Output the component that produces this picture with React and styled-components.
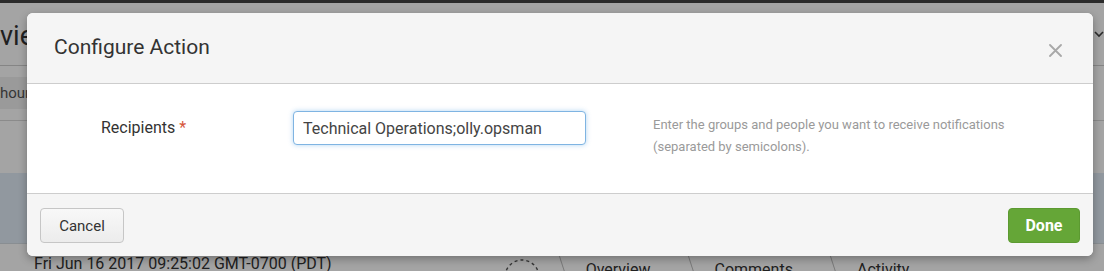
import React from 'react';
import styled, { createGlobalStyle } from 'styled-components';

const GlobalStyle = createGlobalStyle`
  html, body {
    margin: 0;
    padding: 0;
    width: 1104px;
    height: 271px;
    overflow: hidden;
    background: #fff;
    font-family: Roboto, "Liberation Sans", Arial, sans-serif;
  }
  * { box-sizing: border-box; }
`;

function App() {
  return (
    <Screen>
      <GlobalStyle />
      <Page>
        <TopStrip />
        <PageHeader>
          <PageTitle>view</PageTitle>
          <Chevron width="10" height="7" viewBox="0 0 10 7">
            <polyline points="1,1 5,5 9,1" fill="none" stroke="#444" strokeWidth="1.6" />
          </Chevron>
        </PageHeader>
        <FilterRow>
          <TimeBox>hours</TimeBox>
        </FilterRow>
        <GapRow />
        <SelectedRow />
        <DetailRow>
          <Timestamp>Fri Jun 16 2017 09:25:02 GMT-0700 (PDT)</Timestamp>
          <Spinner width="40" height="40" viewBox="0 0 40 40">
            <circle cx="20" cy="20" r="17" fill="none" stroke="#555" strokeWidth="1.4" strokeDasharray="3 3" />
          </Spinner>
          <Tabs>
            <Tab>Overview</Tab>
            <Tab>Comments</Tab>
            <Tab>Activity</Tab>
          </Tabs>
        </DetailRow>
      </Page>

      <Overlay />

      <Modal>
        <ModalHeader>
          <ModalTitle>Configure Action</ModalTitle>
          <CloseBtn aria-label="Close">
            <svg width="13" height="13" viewBox="0 0 13 13">
              <path d="M1 1 L12 12 M12 1 L1 12" stroke="#a8a8a8" strokeWidth="1.8" strokeLinecap="round" />
            </svg>
          </CloseBtn>
        </ModalHeader>
        <ModalBody>
          <FieldLabel>
            Recipients <Required>*</Required>
          </FieldLabel>
          <TextInput defaultValue="Technical Operations;olly.opsman" />
          <HelpText>
            Enter the groups and people you want to receive notifications
            <br />
            (separated by semicolons).
          </HelpText>
        </ModalBody>
        <ModalFooter>
          <CancelBtn>Cancel</CancelBtn>
          <DoneBtn>Done</DoneBtn>
        </ModalFooter>
      </Modal>
    </Screen>
  );
}

export default App;

const Screen = styled.div`
  position: relative;
  width: 1104px;
  height: 271px;
  overflow: hidden;
`;

const Page = styled.div`
  display: flex;
  flex-direction: column;
  width: 100%;
  background: #fff;
  color: #333;

  & > * {
    flex-shrink: 0;
  }
`;

const TopStrip = styled.div`
  height: 3px;
  background: #434343;
`;

const PageHeader = styled.div`
  height: 63px;
  display: flex;
  align-items: flex-start;
  justify-content: space-between;
  border-bottom: 1px solid #cfcfcf;
`;

const PageTitle = styled.h1`
  margin: 0;
  padding-top: 16px;
  font-size: 27px;
  font-weight: 400;
  line-height: 34px;
  color: #333;
`;

const Chevron = styled.svg`
  margin: 28px 0 0 0;
  flex-shrink: 0;
`;

const FilterRow = styled.div`
  height: 55px;
  display: flex;
  align-items: center;
  border-bottom: 1px solid #d8d8d8;
`;

const TimeBox = styled.div`
  height: 32px;
  width: 120px;
  background: #f0f0f0;
  color: #555;
  font-size: 15px;
  line-height: 32px;
`;

const GapRow = styled.div`
  height: 52px;
`;

const SelectedRow = styled.div`
  height: 71px;
  background: #e1ecf7;
  border-bottom: 1px solid #d6dde4;
`;

const DetailRow = styled.div`
  height: 40px;
  display: flex;
  align-items: flex-start;
  padding-left: 34px;
`;

const Timestamp = styled.div`
  padding-top: 11px;
  font-size: 16px;
  line-height: 18px;
  color: #333;
  white-space: nowrap;
`;

const Spinner = styled.svg`
  margin: 13px 0 0 170px;
  flex-shrink: 0;
`;

const Tabs = styled.div`
  display: flex;
  margin-left: 11px;
  padding-top: 17px;
`;

const Tab = styled.div`
  position: relative;
  padding: 0 31px 0 33px;
  font-size: 16px;
  line-height: 18px;
  color: #333;
  white-space: nowrap;

  &::before {
    content: '';
    position: absolute;
    left: 2px;
    top: -17px;
    height: 40px;
    border-left: 1px solid #bcbcbc;
    transform: skewX(18deg);
    transform-origin: top left;
  }
`;

const Overlay = styled.div`
  position: absolute;
  inset: 0;
  background: rgba(0, 0, 0, 0.355);
`;

const Modal = styled.div`
  position: absolute;
  top: 13px;
  left: 27px;
  width: 1066px;
  height: 243px;
  display: flex;
  flex-direction: column;
  background: #fff;
  border-radius: 6px;
  overflow: hidden;
  box-shadow: 0 3px 9px rgba(0, 0, 0, 0.3);
`;

const ModalHeader = styled.div`
  height: 71px;
  flex-shrink: 0;
  display: flex;
  align-items: center;
  justify-content: space-between;
  padding: 0 31px 0 27px;
  background: #f5f5f5;
  border-bottom: 1px solid #cdcdcd;
`;

const ModalTitle = styled.h3`
  margin: 0 0 3px 0;
  font-size: 21px;
  font-weight: 400;
  color: #333;
`;

const CloseBtn = styled.button`
  display: flex;
  padding: 0;
  margin-top: 4px;
  border: none;
  background: none;
  cursor: pointer;
`;

const ModalBody = styled.div`
  height: 110px;
  flex-shrink: 0;
  display: grid;
  grid-template-columns: 125px 293px 1fr;
  column-gap: 67px;
  align-items: start;
  padding: 27px 0 0 74px;
  background: #fff;
  border-bottom: 1px solid #cdcdcd;
`;

const FieldLabel = styled.label`
  padding-top: 7px;
  font-size: 16px;
  line-height: 20px;
  color: #333;
  white-space: nowrap;
`;

const Required = styled.span`
  color: #d6563c;
`;

const TextInput = styled.input`
  width: 293px;
  height: 34px;
  padding: 0 9px;
  font-family: inherit;
  font-size: 16px;
  color: #444;
  background: #fff;
  border: 1px solid #7fb4e2;
  border-radius: 4px;
  outline: none;
  box-shadow: 0 0 5px rgba(82, 160, 225, 0.45);
`;

const HelpText = styled.div`
  padding-top: 3px;
  font-size: 13px;
  line-height: 22px;
  color: #9a9a9a;
`;

const ModalFooter = styled.div`
  flex: 1;
  display: flex;
  justify-content: space-between;
  align-items: flex-start;
  padding: 14px 13px 0 13px;
  background: #f5f5f5;
`;

const CancelBtn = styled.button`
  width: 84px;
  height: 35px;
  font-family: inherit;
  font-size: 15px;
  color: #333;
  background: linear-gradient(#f8f8f8, #ececec);
  border: 1px solid #c6c6c6;
  border-radius: 4px;
  cursor: pointer;
`;

const DoneBtn = styled.button`
  width: 72px;
  height: 35px;
  font-family: inherit;
  font-size: 16px;
  font-weight: 700;
  color: #fff;
  background: #65a637;
  border: 1px solid #5c9a31;
  border-radius: 4px;
  cursor: pointer;
`;
